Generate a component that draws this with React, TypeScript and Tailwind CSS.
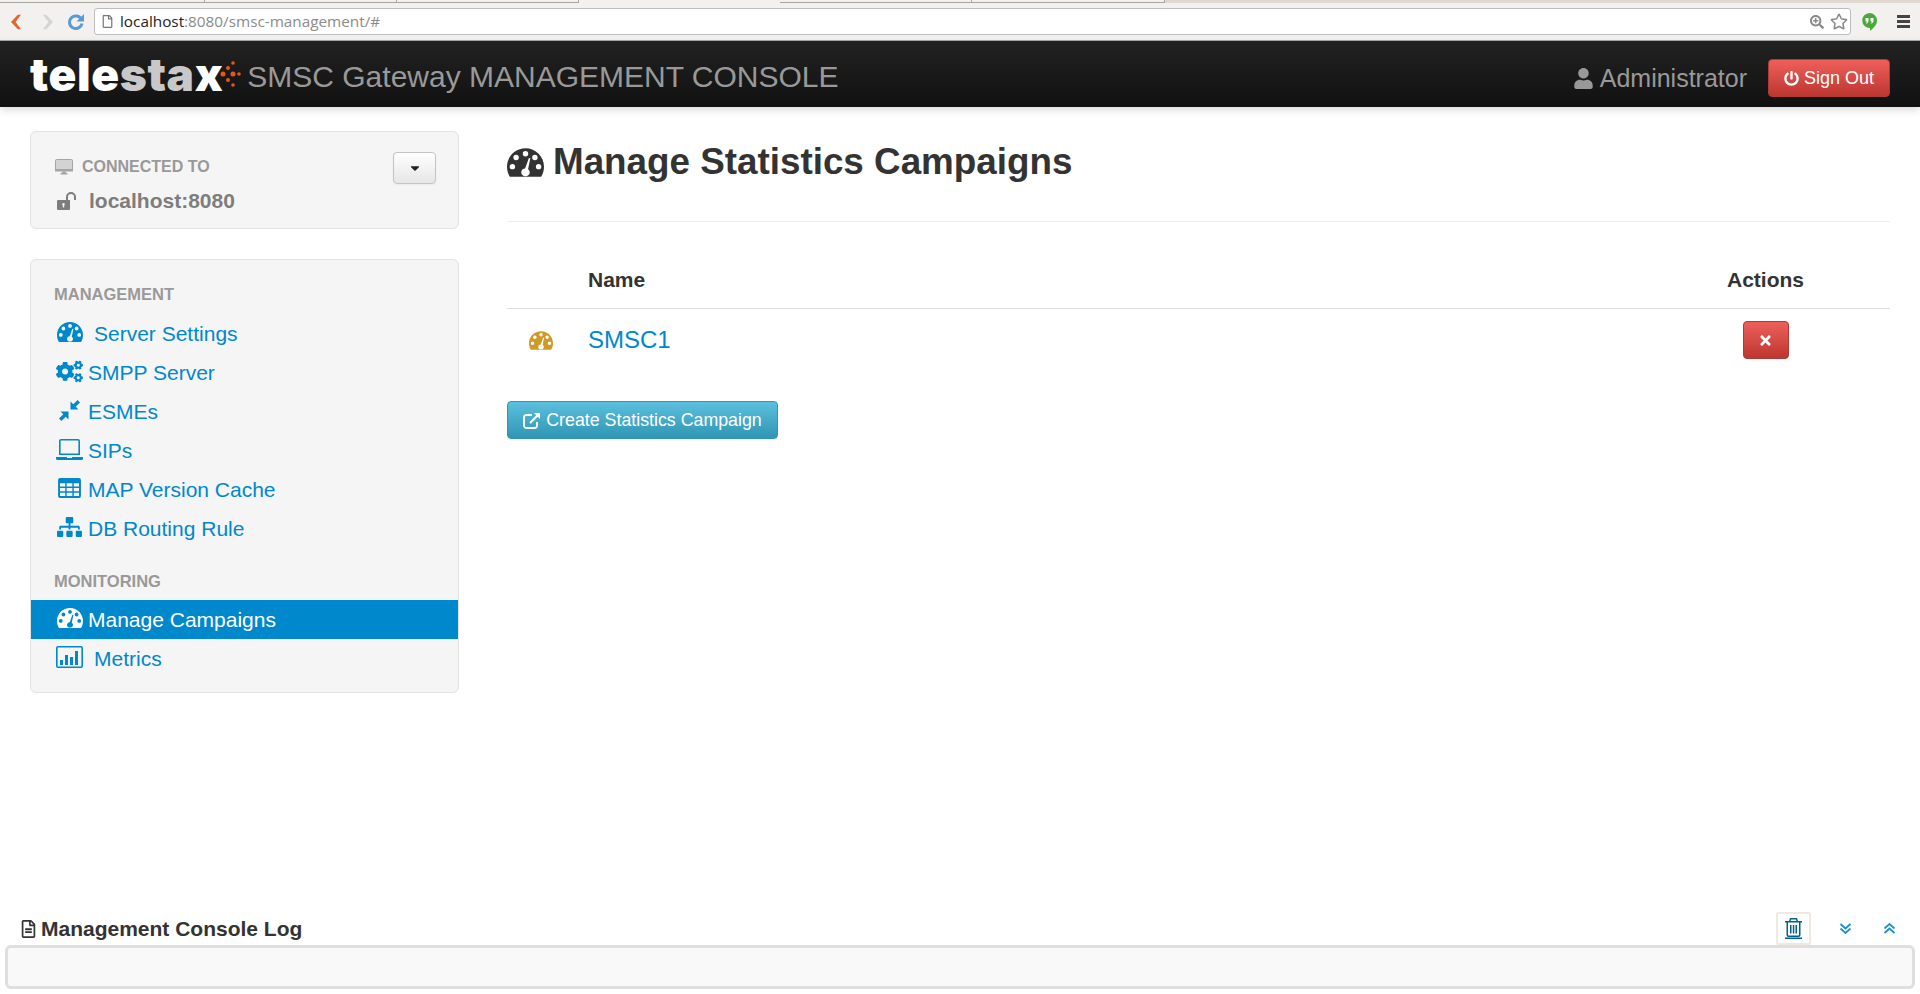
import React from 'react';
import { FaCaretDown, FaCogs, FaPowerOff, FaSearchPlus, FaRegStar, FaRegFile, FaRegFileAlt, FaSitemap, FaTimes, FaUser } from 'react-icons/fa';

type IconProps = { className?: string };

const Gauge = ({ className }: IconProps) => (
  <svg viewBox="0 0 26 20" className={className} fill="currentColor">
    <path
      fillRule="evenodd"
      d="M13 0C5.8 0 0 5.8 0 13c0 2.6.7 5 2 7h22c1.3-2 2-4.4 2-7C26 5.8 20.2 0 13 0zM13 2a1.9 1.9 0 1 1 0 3.8A1.9 1.9 0 0 1 13 2zM6.4 4.6a1.9 1.9 0 1 1 0 3.8 1.9 1.9 0 0 1 0-3.8zM19.6 4.6a1.9 1.9 0 1 1 0 3.8 1.9 1.9 0 0 1 0-3.8zM3.8 11a1.9 1.9 0 1 1 0 3.8 1.9 1.9 0 0 1 0-3.8zM22.2 11a1.9 1.9 0 1 1 0 3.8 1.9 1.9 0 0 1 0-3.8zM15.4 6.8l1 .3-1.6 7.6c.7.5 1.2 1.3 1.2 2.3 0 1.4-1.2 2.6-3 2.6s-3-1.2-3-2.6c0-1.5 1.2-2.7 2.7-2.7z"
    />
  </svg>
);

const Compress = ({ className }: IconProps) => (
  <svg viewBox="0 0 21 21" className={className} fill="currentColor">
    <path d="M11.5 9.5V1.5l2.8 2.8L18.6 0 21 2.4l-4.3 4.3 2.8 2.8zM9.5 11.5v8l-2.8-2.8L2.4 21 0 18.6l4.3-4.3-2.8-2.8z" />
  </svg>
);

const Laptop = ({ className }: IconProps) => (
  <svg viewBox="0 0 27 21" className={className} fill="currentColor">
    <path fillRule="evenodd" d="M5 0h17a2 2 0 0 1 2 2v14H3V2a2 2 0 0 1 2-2zM5 1.6a.4.4 0 0 0-.4.4v12.4h17.8V2a.4.4 0 0 0-.4-.4z" />
    <path d="M0 18h11v1h5v-1h11v1.5a1.5 1.5 0 0 1-1.5 1.5h-24A1.5 1.5 0 0 1 0 19.500z" />
  </svg>
);

const TableGrid = ({ className }: IconProps) => (
  <svg viewBox="0 0 24 21" className={className} fill="currentColor">
    <path
      fillRule="evenodd"
      d="M2 0h20a2 2 0 0 1 2 2v17a2 2 0 0 1-2 2H2a2 2 0 0 1-2-2V2a2 2 0 0 1 2-2zM2 5.500v3.500h5.500V5.500zM9 5.500v3.500h6V5.500zM16.500 5.500v3.500H22V5.500zM2 10.500V14h5.500v-3.500zM9 10.500V14h6v-3.500zM16.500 10.500V14H22v-3.500zM2 15.500V19h5.500v-3.500zM9 15.500V19h6v-3.500zM16.500 15.500V19H22v-3.500z"
    />
  </svg>
);

const BarChartBox = ({ className }: IconProps) => (
  <svg viewBox="0 0 27 22" className={className} fill="currentColor">
    <path
      fillRule="evenodd"
      d="M2 0h23a2 2 0 0 1 2 2v18a2 2 0 0 1-2 2H2a2 2 0 0 1-2-2V2a2 2 0 0 1 2-2zM2 1.600a.4.4 0 0 0-.4.4v18c0 .2.2.4.4.4h23c.2 0 .4-.2.4-.4V2a.4.4 0 0 0-.4-.4z"
    />
    <path d="M4 14h3v5H4zM9 9h3v10H9zM14 11h3v8h-3zM19 5h3v14h-3z" />
  </svg>
);

const Monitor = ({ className }: IconProps) => (
  <svg viewBox="0 0 18 16" className={className}>
    <rect x="0.500" y="0.500" width="17" height="11" rx="1" fill="#d3d3d3" stroke="#a5a5a5" />
    <rect x="0" y="10" width="18" height="2.500" fill="#a5a5a5" />
    <path d="M7 12.500h4V14h1.500v1.500h-7V14H7z" fill="#a5a5a5" />
  </svg>
);

const OpenLock = ({ className }: IconProps) => (
  <svg viewBox="0 0 20 18" className={className} fill="currentColor">
    <path fillRule="evenodd" d="M1 8h12v9a1 1 0 0 1-1 1H1a1 1 0 0 1-1-1V9a1 1 0 0 1 1-1zM6.500 11a1.300 1.300 0 0 0-.7 2.400V15.500h1.400v-2.100A1.300 1.300 0 0 0 6.500 11z" />
    <path d="M9 8V5a5 5 0 0 1 10 0v3h-2V5a3 3 0 0 0-6 0v3z" />
  </svg>
);

const ExternalLink = ({ className }: IconProps) => (
  <svg viewBox="0 0 18 17" className={className} fill="none" stroke="currentColor" strokeWidth="1.800">
    <path d="M9 3H3.500A2.500 2.500 0 0 0 1 5.500v8A2.500 2.500 0 0 0 3.500 16h8a2.500 2.500 0 0 0 2.500-2.500V10" />
    <path d="M7 11 16 2" strokeWidth="2.200" />
    <path d="M11 1h6v6z" fill="currentColor" stroke="none" />
  </svg>
);

const Trash = ({ className }: IconProps) => (
  <svg viewBox="0 0 17 21" className={className} fill="currentColor">
    <path fillRule="evenodd" d="M5 0h7l1 3h4v1.500h-1.500V17a2 2 0 0 1-2 2h-10a2 2 0 0 1-2-2V4.500H0V3h4zM6 1.500 5.500 3h6L11 1.500zM3 4.500V17c0 .3.2.5.500.5h10c.3 0 .5-.2.5-.5V4.500z" />
    <path d="M5 7h1.500v8.500H5zM7.800 7h1.500v8.500H7.800zM10.500 7H12v8.500h-1.500zM0 19.500h17V21H0z" />
  </svg>
);

const DoubleChevron = ({ className, up }: IconProps & { up?: boolean }) => (
  <svg viewBox="0 0 12 11" className={className} fill="none" stroke="currentColor" strokeWidth="1.800">
    <path d={up ? 'M1 5.500 6 1l5 4.500M1 10 6 5.500 11 10' : 'M1 1l5 4.500L11 1M1 5.500 6 10l5-4.500'} />
  </svg>
);

const Back = ({ className, forward }: IconProps & { forward?: boolean }) => (
  <svg viewBox="0 0 11 16" className={className} fill="currentColor">
    <path d={forward ? 'M3.500 0 11 8l-7.500 8H0l6-8-6-8z' : 'M7.500 0 0 8l7.500 8H11L5 8l6-8z'} />
  </svg>
);

const Reload = ({ className }: IconProps) => (
  <svg viewBox="0 0 16 16" className={className} fill="none" stroke="currentColor" strokeWidth="3">
    <path d="M13.500 5.500A6.300 6.300 0 1 0 14 9.500" />
    <path d="M16 0v7.500H8.500z" fill="currentColor" stroke="none" />
  </svg>
);

const Hangouts = ({ className }: IconProps) => (
  <svg viewBox="0 0 15 18" className={className}>
    <path d="M7.500 0a7.500 7.500 0 0 1 7.500 7.500c0 4.500-4 8-7 10.500v-3A7.500 7.500 0 0 1 7.500 0z" fill="#4aa93b" />
    <path d="M3.500 5h3v3.500L5 10.500H4L5 8.500H3.500zM8.500 5h3v3.500L10 10.500H9L10 8.500H8.500z" fill="#ffffff" />
  </svg>
);

const Bars = ({ className }: IconProps) => (
  <svg viewBox="0 0 13 13" className={className} fill="currentColor">
    <path d="M0 0h13v3H0zM0 5h13v3H0zM0 10h13v3H0z" />
  </svg>
);

const NavItem = ({
  icon,
  label,
  active,
  wide,
}: {
  icon: React.ReactNode;
  label: string;
  active?: boolean;
  wide?: boolean;
}) => (
  <a
    href="#"
    className={
      active
        ? 'flex h-[39px] items-center pl-[25px] bg-[#0088cc] text-white text-[21px]'
        : 'flex h-[39px] items-center pl-[25px] text-[#0088cc] text-[21px]'
    }
  >
    <span className={wide ? 'flex w-[38px] shrink-0 items-center -mt-[3px]' : 'flex w-[32px] shrink-0 items-center -mt-[3px]'}>{icon}</span>
    {label}
  </a>
);

const Tab = ({ w }: { w: string }) => <div className={`${w} h-[3px] border-b border-r border-[#a8a69f]`} />;

const App: React.FC = () => {
  return (
    <div className="flex h-[994px] flex-col overflow-hidden bg-white font-['Liberation_Sans',sans-serif] text-[#333333]">
      {/* browser chrome */}
      <div className="flex h-[3px] bg-[#f2f1ef]">
        <Tab w="w-[205px]" />
        <Tab w="w-[192px]" />
        <Tab w="w-[182px]" />
        <div className="w-[201px]" />
        <Tab w="w-[192px]" />
        <Tab w="w-[193px]" />
        <div className="flex-1 bg-[#e0d8d0]" />
      </div>
      <div className="flex h-[38px] items-center border-b border-[#a9a9a9] bg-[#f2f1ef] pl-[11px] pr-[10px]">
        <Back className="h-[16px] w-[10px] text-[#e0682c]" />
        <Back forward className="ml-[22px] h-[16px] w-[10px] text-[#d4d4d4]" />
        <Reload className="ml-[15px] h-[16px] w-[16px] text-[#5b9bd5]" />
        <div className="ml-[10px] flex h-[27px] flex-1 items-center rounded-[3px] border border-[#bdbdbd] bg-white pl-[7px] pr-[2px]">
          <FaRegFile className="h-[13px] w-[11px] text-[#777777]" />
          <span className="ml-[7px] font-['Open_Sans',sans-serif] text-[15.300px] text-[#222222]">
            localhost<span className="text-[#8a8a8a]">:8080/smsc-management/#</span>
          </span>
          <FaSearchPlus className="ml-auto h-[14px] w-[14px] text-[#8a8a8a]" />
          <FaRegStar className="ml-[6px] h-[17px] w-[18px] text-[#8a8a8a]" />
        </div>
        <Hangouts className="ml-[11px] h-[18px] w-[15px]" />
        <Bars className="ml-[20px] h-[13px] w-[13px] text-[#444444]" />
      </div>

      {/* app header */}
      <header className="flex h-[66px] shrink-0 items-center justify-between bg-gradient-to-b from-[#222222] to-[#111111] pl-[30px] pr-[30px] shadow-[0_3px_8px_rgba(0,0,0,0.15)]">
        <div className="flex items-center">
          <span className="font-['Inter',sans-serif] text-[46px] font-black leading-none tracking-[0.6px] text-white">
            tele<span className="text-[#c8c8c8]">sta</span>x
          </span>
          <svg viewBox="0 0 22 28" className="ml-[-4px] h-[28px] w-[22px]" fill="#e8561f">
            <circle cx="4" cy="14" r="2.500" />
            <circle cx="9" cy="8" r="2" />
            <circle cx="9" cy="20" r="2" />
            <circle cx="14" cy="3" r="1.800" />
            <circle cx="14" cy="14" r="2.500" />
            <circle cx="14" cy="25" r="1.800" />
            <circle cx="20" cy="14" r="1.800" />
          </svg>
          <span className="ml-[6px] pt-[5px] text-[30px] text-[#999999]">SMSC Gateway MANAGEMENT CONSOLE</span>
        </div>
        <div className="flex items-center pt-[8px]">
          <FaUser className="h-[21px] w-[21px] text-[#999999]" />
          <span className="ml-[6px] pt-[1px] text-[25px] text-[#999999]">Administrator</span>
          <button className="ml-[21px] flex h-[38px] w-[122px] items-center justify-center rounded-[4px] border border-[#b03a36] bg-gradient-to-b from-[#ee5f5b] to-[#bd362f] text-[18px] text-white">
            <FaPowerOff className="mr-[5px] h-[15px] w-[15px]" />
            Sign Out
          </button>
        </div>
      </header>

      {/* body */}
      <main className="flex min-h-0 flex-1 pl-[30px] pr-[30px]">
        <aside className="w-[429px] shrink-0 pt-[24px]">
          <div className="relative h-[98px] rounded-[6px] border border-[#e3e3e3] bg-[#f5f5f5] pl-[24px] pt-[23px]">
            <div className="flex items-center text-[16px] font-bold text-[#999999]">
              <Monitor className="mr-[9px] h-[16px] w-[18px]" />
              CONNECTED TO
            </div>
            <div className="mt-[6px] flex items-center pl-[2px] text-[21px] font-bold text-[#7d7d7d]">
              <OpenLock className="mr-[12px] h-[18px] w-[20px]" />
              localhost:8080
            </div>
            <button className="absolute right-[22px] top-[20px] flex h-[32px] w-[43px] items-center justify-center rounded-[4px] border border-[#c4c4c4] bg-gradient-to-b from-white to-[#e6e6e6] shadow-[0_1px_2px_rgba(0,0,0,0.05)]">
              <FaCaretDown className="h-[14px] w-[14px] text-[#222222]" />
            </button>
          </div>

          <nav className="mt-[30px] h-[434px] rounded-[6px] border border-[#e3e3e3] bg-[#f5f5f5] pt-[20px]">
            <div className="h-[34px] pl-[23px] text-[16.500px] font-bold leading-[29px] text-[#999999]">MANAGEMENT</div>
            <NavItem wide icon={<Gauge className="ml-[1px] h-[20px] w-[26px]" />} label="Server Settings" />
            <NavItem icon={<FaCogs className="h-[25px] w-[27px]" />} label="SMPP Server" />
            <NavItem icon={<Compress className="ml-[3px] h-[21px] w-[21px]" />} label="ESMEs" />
            <NavItem icon={<Laptop className="h-[21px] w-[27px]" />} label="SIPs" />
            <NavItem icon={<TableGrid className="ml-[2px] h-[20px] w-[23px]" />} label="MAP Version Cache" />
            <NavItem icon={<FaSitemap className="ml-[1px] h-[22px] w-[25px]" />} label="DB Routing Rule" />
            <div className="mt-[17px] h-[35px] pl-[23px] text-[16.500px] font-bold leading-[33px] text-[#999999]">MONITORING</div>
            <NavItem active icon={<Gauge className="ml-[1px] h-[20px] w-[26px]" />} label="Manage Campaigns" />
            <NavItem wide icon={<BarChartBox className="h-[22px] w-[27px]" />} label="Metrics" />
          </nav>
        </aside>

        <section className="ml-[48px] flex-1">
          <h1 className="mt-[32px] flex items-center text-[36.800px] font-bold leading-[46px] text-[#333333]">
            <Gauge className="mr-[9px] h-[29px] w-[37px]" />
            Manage Statistics Campaigns
          </h1>
          <div className="mt-[36px] border-t border-[#eeeeee]" />

          <table className="mt-[29px] w-full border-collapse text-[21px]">
            <thead>
              <tr className="h-[57px] border-b border-[#dddddd] text-left">
                <th className="w-[81px]" />
                <th className="font-bold">Name</th>
                <th className="w-[249px] text-center font-bold">Actions</th>
              </tr>
            </thead>
            <tbody>
              <tr className="h-[64px]">
                <td className="pl-[22px]">
                  <Gauge className="h-[19px] w-[24px] text-[#cf9a25]" />
                </td>
                <td className="text-[24px] text-[#0088cc]">SMSC1</td>
                <td>
                  <button className="mx-auto flex h-[38px] w-[46px] items-center justify-center rounded-[4px] border border-[#b03a36] bg-gradient-to-b from-[#ee5f5b] to-[#bd362f] text-white">
                    <FaTimes className="h-[15px] w-[13px]" />
                  </button>
                </td>
              </tr>
            </tbody>
          </table>

          <button className="mt-[29px] flex h-[38px] w-[271px] items-center justify-center rounded-[4px] border border-[#2f96b4] bg-gradient-to-b from-[#5bc0de] to-[#2f96b4] text-[17.800px] text-white">
            <ExternalLink className="mr-[5px] h-[17px] w-[18px]" />
            Create Statistics Campaign
          </button>
        </section>
      </main>

      {/* log */}
      <footer className="shrink-0 px-[5px] pb-[5px]">
        <div className="flex h-[33px] items-center pl-[16px]">
          <FaRegFileAlt className="mr-[5px] h-[18px] w-[15px]" />
          <span className="text-[21px] font-bold">Management Console Log</span>
          <button className="ml-auto flex h-[33px] w-[35px] items-center justify-center rounded-[2px] border-2 border-[#eee9e2] text-[#00618f]">
            <Trash className="h-[21px] w-[17px]" />
          </button>
          <DoubleChevron className="ml-[28px] h-[11px] w-[13px] text-[#1d8fd8]" />
          <DoubleChevron up className="ml-[31px] mr-[19px] h-[11px] w-[13px] text-[#1d8fd8]" />
        </div>
        <div className="h-[44px] rounded-[6px] border-[3px] border-[#dfdfdf] bg-[#f9f9f9]" />
      </footer>
    </div>
  );
};

export default App;
